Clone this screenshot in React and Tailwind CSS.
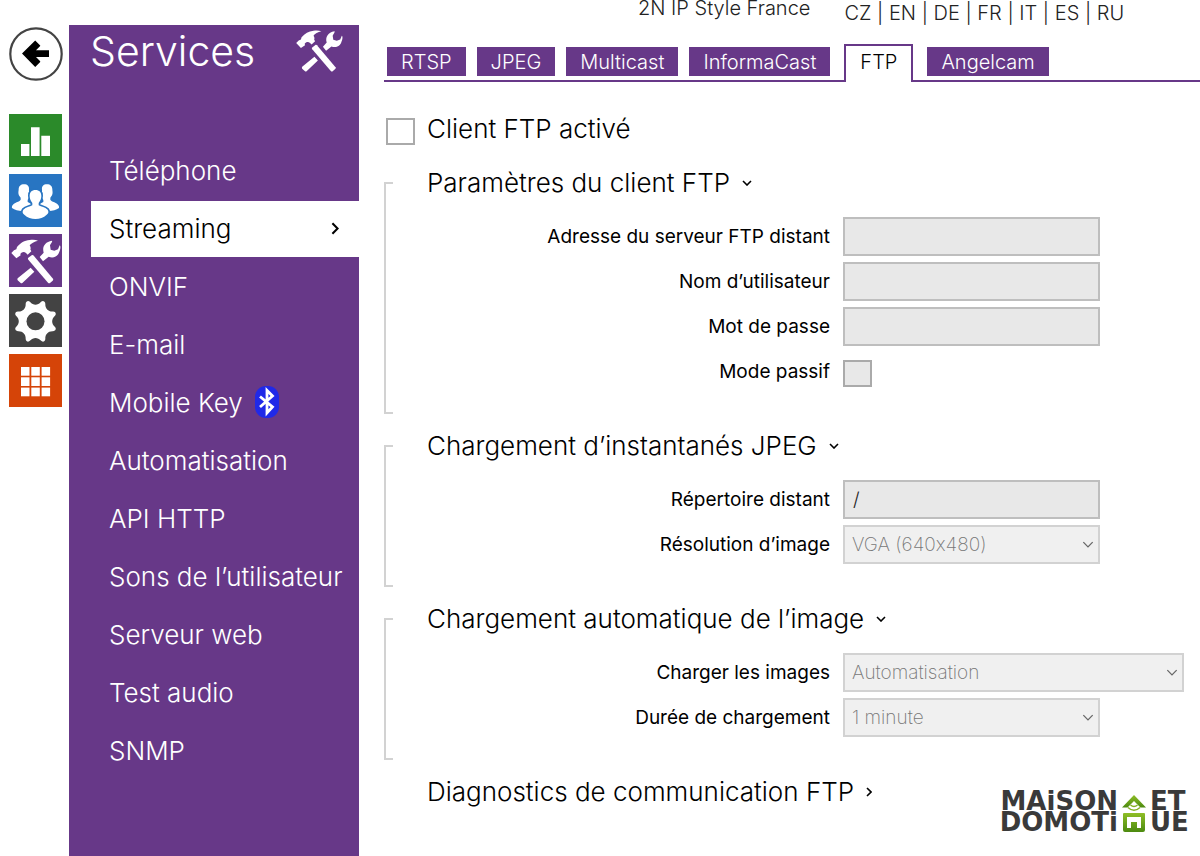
import React, { useState } from "react";

const MENU = [
  "Téléphone",
  "Streaming",
  "ONVIF",
  "E-mail",
  "Mobile Key",
  "Automatisation",
  "API HTTP",
  "Sons de l’utilisateur",
  "Serveur web",
  "Test audio",
  "SNMP",
];

const TABS = ["RTSP", "JPEG", "Multicast", "InformaCast", "FTP", "Angelcam"];
const LANGS = ["CZ", "EN", "DE", "FR", "IT", "ES", "RU"];

function BackIcon() {
  return (
    <svg viewBox="0 0 54 54" className="size-[54px]" aria-hidden="true">
      <circle cx="27" cy="27" r="25.7" fill="#fff" stroke="#444" strokeWidth="2.2" />
      <path d="M13 26.5 26.2 13.4 31.2 18.4 31.2 19 27 23.2H40V30H27L31.2 34.2V35L26.2 40Z" fill="#000" />
    </svg>
  );
}

function ChartIcon() {
  return (
    <svg viewBox="0 0 53 53" className="size-full" fill="#fff" aria-hidden="true">
      <path d="M12 30h8.4v12H12zM22 13.3h8.6V42H22zM32.3 21.7h8.7V42h-8.7z" />
    </svg>
  );
}

function UsersIcon() {
  const bust =
    "M79.5 48C91 48 97 55 97 66C97 75 93 82 89 87V94C97 99 108 99 116 107C120 113 118 119 113 122C104 131 92 135 79.5 135C67 135 55 131 46 122C41 119 39 113 43 107C51 99 62 99 70 94V87C66 82 62 75 62 66C62 55 68 48 79.5 48Z";
  const side =
    "M45 31C56 31 61 37 60 47C59 56 64 66 56 78V84C62 88 67 89 72 93L73 106L40 111C28 111 17 108 9 102C7 94 16 88 23 85C29 82 33 81 35 77V71C25 61 29 53 29 46C29 37 35 31 45 31Z";
  return (
    <svg viewBox="0 0 159 159" className="size-full" fill="#fff" aria-hidden="true">
      <path d={side} />
      <path d={side} transform="translate(159 0) scale(-1 1)" />
      <path d={bust} stroke="#2875c2" strokeWidth="10" paintOrder="stroke" />
    </svg>
  );
}

function ToolsIcon() {
  return (
    <svg viewBox="0 0 159 159" className="size-full" fill="#fff" aria-hidden="true">
      <path d="M7 57 15 49 22 46 24 39C35 27 46 19 62 18C71 17 80 17 87 20C76 23 66 28 62 34C65 39 66 43 64 46L67 52 56 62 51 57C45 52 38 54 34 60L35 64 22 73Z" />
      <path d="M57 72 69 63Q71 62 73 64L132 134Q134 137 131 140L123 147Q120 149 117 146L58 77Q56 74 57 72Z" />
      <path d="M65 101 76 113 40 147Q37 149 35 147L26 139Q24 136 26 133Z" />
      <path d="M92 69 104 56C99 40 107 23 129 20C131 23 126 27 123 34L125 47 136 50 147 46 152 34C156 36 154 48 151 53C147 67 133 74 119 68L102 82Z" />
    </svg>
  );
}

const GEAR = (() => {
  const at = (deg, r) => {
    const a = (deg * Math.PI) / 180;
    return `${(79.5 + r * Math.sin(a)).toFixed(1)} ${(82 - r * Math.cos(a)).toFixed(1)}`;
  };
  let d = "";
  for (let k = 0; k < 8; k++) {
    const c = 22.5 + 45 * k;
    d += `${k ? "L" : "M"}${at(c - 7, 60)}Q${at(c - 5, 64)} ${at(c - 2, 65)}L${at(c + 2, 65)}Q${at(c + 5, 64)} ${at(c + 7, 60)}`;
    d += `C${at(c + 14, 48)} ${at(c + 31, 48)} ${at(c + 38, 60)}`;
  }
  return d + "Z";
})();

function GearIcon() {
  return (
    <svg viewBox="0 0 159 159" className="size-full" aria-hidden="true">
      <path d={GEAR} fill="#fff" />
      <circle cx="79.5" cy="82" r="27" fill="#434343" />
    </svg>
  );
}

function GridIcon() {
  return (
    <svg viewBox="0 0 53 53" className="size-full" fill="#fff" aria-hidden="true">
      {[12, 22.3, 32.6].map((y) =>
        [12, 22.3, 32.6].map((x) => <rect key={`${x}-${y}`} x={x} y={y + 1} width="8.5" height="8.7" />)
      )}
    </svg>
  );
}

function BluetoothIcon() {
  return (
    <svg viewBox="0 0 24 32" className="h-8 w-6" aria-hidden="true">
      <rect x="0" y="0" width="24" height="32" rx="11" fill="#2029e8" />
      <path d="M5 10.5 17.5 21 12 27V4.5L17.5 10 5 21" fill="none" stroke="#fff" strokeWidth="2.8" />
    </svg>
  );
}

function Chevron({ right, thin, className }) {
  return (
    <svg
      viewBox={right ? "0 0 6 10" : "0 0 10 6"}
      className={className}
      fill="none"
      stroke="currentColor"
      strokeWidth={thin ? 1.1 : 1.6}
      aria-hidden="true"
    >
      <path d={right ? "M1 1 5 5 1 9" : "M1 1 5 5 9 1"} />
    </svg>
  );
}

const RAIL = [
  { label: "État", Icon: ChartIcon, bg: "bg-[#2b8a2a]" },
  { label: "Répertoire", Icon: UsersIcon, bg: "bg-[#2875c2]" },
  { label: "Services", Icon: ToolsIcon, bg: "bg-[#673888]" },
  { label: "Matériel", Icon: GearIcon, bg: "bg-[#434343]" },
  { label: "Système", Icon: GridIcon, bg: "bg-[#d54408]" },
];

function Section({ title, children }) {
  return (
    <section className="flex gap-[34px]">
      <span className="mt-[14px] w-[9px] shrink-0 border-y-2 border-l-2 border-[#d2d2d2]" />
      <div className="min-w-0 flex-1 pb-[23px]">
        <SectionTitle open>{title}</SectionTitle>
        <div className="mt-[19px] flex flex-col gap-[6px]">{children}</div>
      </div>
    </section>
  );
}

function SectionTitle({ open, children }) {
  return (
    <h2 className="text-[26px] leading-[30px] font-light">
      <button type="button" aria-expanded={!!open} className="flex items-center gap-3 whitespace-nowrap">
        {children}
        {open ? <Chevron className="h-[6px] w-[10px]" /> : <Chevron right className="h-[10px] w-[6px]" />}
      </button>
    </h2>
  );
}

function Row({ id, label, children }) {
  return (
    <div className="flex min-h-[39px] items-center gap-[13px]">
      <label htmlFor={id} className="w-[403px] text-right text-[19px] leading-6">
        {label}
      </label>
      {children}
    </div>
  );
}

function TextField({ id, type = "text", value }) {
  return (
    <input
      id={id}
      type={type}
      defaultValue={value}
      disabled
      className="h-[39px] w-[257px] border-2 border-[#bebebe] bg-[#e8e8e8] px-2 text-[19px] font-light text-[#222]"
    />
  );
}

function SelectField({ id, value, wide }) {
  return (
    <div className={wide ? "relative w-[341px]" : "relative w-[257px]"}>
      <select
        id={id}
        disabled
        className="h-[39px] w-full appearance-none border-2 border-[#d2d2d2] bg-[#f0f0f0] px-[7px] pt-[2px] text-[19px] font-extralight text-[#777] opacity-100"
      >
        <option>{value}</option>
      </select>
      <Chevron thin className="pointer-events-none absolute top-4 right-[6px] h-[7px] w-[12px] text-[#666]" />
    </div>
  );
}

function Logo() {
  return (
    <div
      role="img"
      aria-label="Maison et Domotique"
      className="grid grid-cols-[128px_24px_46px] items-center gap-x-1 text-[26px] leading-[21px] font-bold text-[#3a3a3a] [font-family:'DejaVu_Sans',sans-serif]"
    >
      <span className="text-right">MAiSON</span>
      <svg viewBox="0 0 24 42" className="row-span-2 h-[42px] w-6" aria-hidden="true">
        <defs>
          <linearGradient id="leaf" x1="0" y1="0" x2="0" y2="1">
            <stop offset="0" stopColor="#8fbe26" />
            <stop offset="1" stopColor="#4c8a10" />
          </linearGradient>
        </defs>
        <path d="M12 4 24 16.5H18.5L12 10 5.5 16.5H0Z" fill="url(#leaf)" />
        <path d="M8.5 14Q12 17 15.5 14M6 16.5Q12 22 18 16.5" fill="none" stroke="#83b022" strokeWidth="1.5" />
        <path fillRule="evenodd" d="M1 23Q1 22 2 22H22Q23 22 23 23V39Q23 41 21 41H3Q1 41 1 39ZM5 26V37H9V31H15V37H19V26Z" fill="url(#leaf)" />
      </svg>
      <span>ET</span>
      <span className="text-right">DOMOTi</span>
      <span>UE</span>
    </div>
  );
}

export default function App() {
  const [tab, setTab] = useState("FTP");
  return (
    <div className="flex min-h-screen bg-white text-black [font-family:Inter,'Liberation_Sans',sans-serif] [font-feature-settings:'calt'_0]">
      <nav aria-label="Sections" className="flex w-[69px] shrink-0 flex-col pt-[27px] pl-[9px]">
        <button type="button" aria-label="Retour" className="size-[54px]">
          <BackIcon />
        </button>
        <div className="mt-[33px] flex flex-col gap-[7px]">
          {RAIL.map(({ label, Icon, bg }) => (
            <a key={label} href="#" aria-label={label} className={`${bg} size-[53px]`}>
              <Icon />
            </a>
          ))}
        </div>
      </nav>

      <aside className="mt-[25px] w-[290px] shrink-0 bg-[#673888] text-white">
        <div className="flex items-start justify-between pr-[15px] pl-[21px]">
          <h1 className="text-[41px] leading-[52px] font-light">Services</h1>
          <span className="size-[50px]">
            <ToolsIcon />
          </span>
        </div>
        <ul className="mt-[66px] flex flex-col gap-[2px] pl-[22px] text-[26px] font-light">
          {MENU.map((item) => {
            const active = item === "Streaming";
            return (
              <li key={item}>
                <a
                  href="#"
                  aria-current={active ? "page" : undefined}
                  className={
                    active
                      ? "flex h-14 items-center justify-between bg-white pr-5 pb-[2px] pl-[18px] whitespace-nowrap text-black"
                      : "flex h-14 items-center gap-3 pb-[2px] pl-[18px] whitespace-nowrap"
                  }
                >
                  {item}
                  {active && <Chevron right className="h-[13px] w-[8px]" />}
                  {item === "Mobile Key" && <BluetoothIcon />}
                </a>
              </li>
            );
          })}
        </ul>
      </aside>

      <main className="min-w-0 flex-1 pl-[25px]">
        <header className="flex h-11 gap-[34px] pl-[254px] text-[20px] leading-6 font-light whitespace-nowrap text-[#222]">
          <span className="-mt-1">2N IP Style France</span>
          <span className="mt-[1px]">
            {LANGS.map((l, i) => (
              <React.Fragment key={l}>
                {i > 0 && " | "}
                <a href="#">{l}</a>
              </React.Fragment>
            ))}
          </span>
        </header>

        <div role="tablist" className="flex h-[38px] items-end gap-[11px] border-b-2 border-[#673888] pl-[3px] text-[20px] font-light">
          {TABS.map((t) => (
            <button
              key={t}
              type="button"
              role="tab"
              aria-selected={t === tab}
              onClick={() => setTab(t)}
              className={
                t === tab
                  ? "mx-[3px] -mb-[2px] h-[38px] border-2 border-b-0 border-[#673888] bg-white px-[14px] pb-[4px] text-black"
                  : "mb-1 h-[29px] bg-[#673888] px-[14px] text-white"
              }
            >
              {t}
            </button>
          ))}
        </div>

        <div className="mt-[31px] flex items-center gap-3 pl-[2px] text-[26px] leading-8 font-light">
          <input id="ftp-on" type="checkbox" className="mt-1 h-[27px] w-[29px] appearance-none border-2 border-[#aaa] bg-white" />
          <label htmlFor="ftp-on">Client FTP activé</label>
        </div>

        <div className="mt-[23px] flex flex-col gap-[17px]">
          <Section title="Paramètres du client FTP">
            <Row id="addr" label="Adresse du serveur FTP distant">
              <TextField id="addr" />
            </Row>
            <Row id="user" label="Nom d’utilisateur">
              <TextField id="user" />
            </Row>
            <Row id="pass" label="Mot de passe">
              <TextField id="pass" type="password" />
            </Row>
            <Row id="passive" label="Mode passif">
              <input id="passive" type="checkbox" disabled className="mt-1 h-[27px] w-[29px] appearance-none border-2 border-[#aaa] bg-[#e8e8e8]" />
            </Row>
          </Section>

          <Section title="Chargement d’instantanés JPEG">
            <Row id="dir" label="Répertoire distant">
              <TextField id="dir" value="/" />
            </Row>
            <Row id="res" label="Résolution d’image">
              <SelectField id="res" value="VGA (640x480)" />
            </Row>
          </Section>

          <Section title="Chargement automatique de l’image">
            <Row id="load" label="Charger les images">
              <SelectField id="load" value="Automatisation" wide />
            </Row>
            <Row id="dur" label="Durée de chargement">
              <SelectField id="dur" value="1 minute" />
            </Row>
          </Section>

          <div className="flex items-start justify-between pr-1 pl-[43px]">
            <SectionTitle>Diagnostics de communication FTP</SectionTitle>
            <div className="mt-[14px]">
              <Logo />
            </div>
          </div>
        </div>
      </main>
    </div>
  );
}
